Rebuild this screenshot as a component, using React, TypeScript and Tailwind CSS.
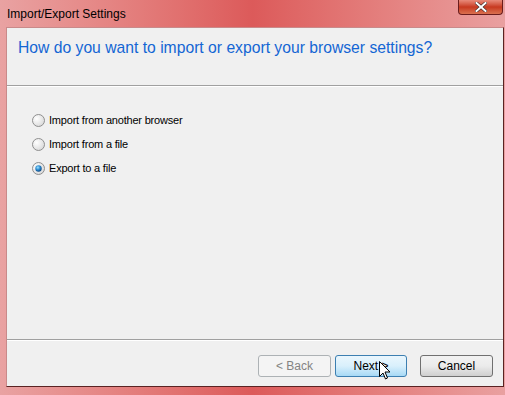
import React from 'react';

const options = [
  { label: 'Import from another browser', checked: false },
  { label: 'Import from a file', checked: false },
  { label: 'Export to a file', checked: true },
];

function Radio({ checked }: { checked: boolean }) {
  return (
    <svg width="13" height="13" viewBox="0 0 13 13">
      <defs>
        <radialGradient id="rg" cx="0.35" cy="0.35" r="0.8">
          <stop offset="0" stopColor="#ffffff" />
          <stop offset="1" stopColor="#d4d4d4" />
        </radialGradient>
        <radialGradient id="dot" cx="0.4" cy="0.35" r="0.7">
          <stop offset="0" stopColor="#9fe3ff" />
          <stop offset="0.5" stopColor="#2a8ad0" />
          <stop offset="1" stopColor="#0b3f78" />
        </radialGradient>
      </defs>
      <circle cx="6.5" cy="6.5" r="6" fill="url(#rg)" stroke="#8f8f8f" strokeWidth="1" />
      {checked && <circle cx="6.5" cy="6.5" r="3.2" fill="url(#dot)" />}
    </svg>
  );
}

export default function App() {
  return (
    <div
      className="w-[505px] h-[395px] overflow-hidden flex flex-col bg-gradient-to-r from-[#e9a2a2] via-[#dc5a5a] to-[#e9a0a0] text-[12px]"
      style={{ fontFamily: '"Liberation Sans", Arial, sans-serif' }}
    >
      {/* Title bar */}
      <div className="h-[27px] flex items-start justify-between shrink-0">
        <div className="pl-[7px] pt-[5px] text-[12px] text-black">Import/Export Settings</div>
        <div className="w-[45px] h-[15px] mr-[2px] rounded-b-[4px] border border-[#6b1d1d] border-t-0 bg-gradient-to-b from-[#e88a7a] via-[#c7381f] to-[#d9704f] flex items-center justify-center">
          <svg width="12" height="10" viewBox="0 0 12 10">
            <path d="M1.5 1 L10.5 9 M10.5 1 L1.5 9" stroke="#3b2b2b" strokeWidth="3.2" strokeLinecap="square" />
            <path d="M1.5 1 L10.5 9 M10.5 1 L1.5 9" stroke="#ffffff" strokeWidth="2" strokeLinecap="square" />
          </svg>
        </div>
      </div>

      {/* Client area */}
      <div className="flex-1 flex ml-[6px] mr-[1px] mb-[8px] border border-[#5a2323] border-t-[#c98a8a] border-l-[#c98a8a] bg-[#f0f0f0] flex-col relative">
        <div className="h-[57px] pl-[11px] pt-[8px] text-[15.7px] text-[#1466d4]">
          How do you want to import or export your browser settings?
        </div>
        <div className="h-px bg-[#a0a0a0] border-b border-white box-content" />

        <div className="pl-[25px] pt-[27px] flex flex-col gap-[11px] flex-1">
          {options.map((o) => (
            <div key={o.label} className="flex items-center gap-[4px] h-[13px]">
              <Radio checked={o.checked} />
              <span className="text-[11px] text-black tracking-[-0.2px]">{o.label}</span>
            </div>
          ))}
        </div>

        <div className="h-px bg-[#a0a0a0] border-b border-white box-content" />
        <div className="h-[45px] flex items-start justify-end pr-[10px] pt-[14px] gap-[4px]">
          <div className="w-[73px] h-[22px] rounded-[3px] border border-[#adb2b5] bg-[#f4f4f4] text-[#838383] flex items-center justify-center">
            &lt; Back
          </div>
          <div className="w-[72px] h-[22px] rounded-[3px] border border-[#3c7fb1] bg-gradient-to-b from-[#eaf6fd] via-[#d9f0fc] to-[#a7d9f5] text-black flex items-center justify-center">
            Next &gt;
          </div>
          <div className="w-[73px] h-[22px] ml-[9px] rounded-[3px] border border-[#707070] bg-gradient-to-b from-[#f2f2f2] via-[#ebebeb] to-[#cfcfcf] text-black flex items-center justify-center">
            Cancel
          </div>
        </div>

        {/* mouse cursor */}
        <svg className="absolute left-[372px] top-[333px]" width="12" height="20" viewBox="0 0 12 20">
          <path d="M0.5 0.5 L0.5 15.5 L4 12 L6.5 18 L8.5 17 L6 11 L11 11 Z" fill="#ffffff" stroke="#000000" strokeWidth="1" strokeLinejoin="round" />
        </svg>
      </div>
    </div>
  );
}
